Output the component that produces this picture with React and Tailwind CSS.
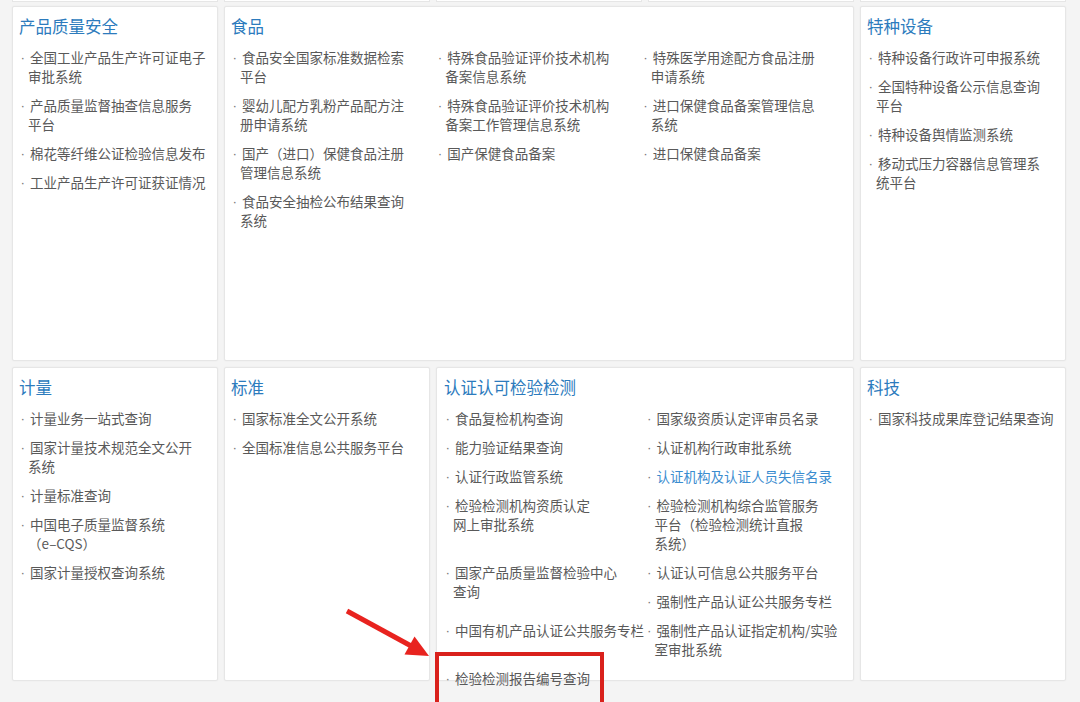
import React from "react";

// each item: array of lines (explicit breaks as in the reference)
const quality = [
  ["全国工业产品生产许可证电子", "审批系统"],
  ["产品质量监督抽查信息服务", "平台"],
  ["棉花等纤维公证检验信息发布"],
  ["工业产品生产许可证获证情况"],
];

const foodCols = [
  [
    ["食品安全国家标准数据检索", "平台"],
    ["婴幼儿配方乳粉产品配方注", "册申请系统"],
    ["国产（进口）保健食品注册", "管理信息系统"],
    ["食品安全抽检公布结果查询", "系统"],
  ],
  [
    ["特殊食品验证评价技术机构", "备案信息系统"],
    ["特殊食品验证评价技术机构", "备案工作管理信息系统"],
    ["国产保健食品备案"],
  ],
  [
    ["特殊医学用途配方食品注册", "申请系统"],
    ["进口保健食品备案管理信息", "系统"],
    ["进口保健食品备案"],
  ],
];

const equipment = [
  ["特种设备行政许可申报系统"],
  ["全国特种设备公示信息查询", "平台"],
  ["特种设备舆情监测系统"],
  ["移动式压力容器信息管理系", "统平台"],
];

const metrology = [
  ["计量业务一站式查询"],
  ["国家计量技术规范全文公开", "系统"],
  ["计量标准查询"],
  ["中国电子质量监督系统", "（e–CQS）"],
  ["国家计量授权查询系统"],
];

const standards = [["国家标准全文公开系统"], ["全国标准信息公共服务平台"]];

// floated two per row, same order as the source page
const certification = [
  { lines: ["食品复检机构查询"] },
  { lines: ["国家级资质认定评审员名录"] },
  { lines: ["能力验证结果查询"] },
  { lines: ["认证机构行政审批系统"] },
  { lines: ["认证行政监管系统"] },
  { lines: ["认证机构及认证人员失信名录"], blue: true },
  { lines: ["检验检测机构资质认定", "网上审批系统"] },
  { lines: ["检验检测机构综合监管服务", "平台（检验检测统计直报", "系统）"] },
  { lines: ["国家产品质量监督检验中心", "查询"] },
  { lines: ["认证认可信息公共服务平台"] },
  { lines: ["强制性产品认证公共服务专栏"] },
  { lines: ["中国有机产品认证公共服务专栏"] },
  { lines: ["强制性产品认证指定机构/实验", "室审批系统"] },
  { lines: ["检验检测报告编号查询"] },
];

const tech = [["国家科技成果库登记结果查询"]];

function Item({ lines, blue, className = "" }) {
  return (
    <li
      className={`pl-[9px] indent-[-9px] mb-[10px] text-[13.5px] leading-[19px] whitespace-nowrap ${
        blue ? "text-[#3a8ccf]" : "text-[#595959]"
      } ${className}`}
    >
      <span
        className="inline-block align-top w-[11px] h-[19px] pl-[1.5px] indent-0 leading-[19px] text-[#777]"
        style={{ fontFamily: '"Liberation Sans", sans-serif' }}
      >
        ·
      </span>
      {lines.map((line, i) => (
        <React.Fragment key={i}>
          {i > 0 && <br />}
          {line}
        </React.Fragment>
      ))}
    </li>
  );
}

function Card({ title, className = "", children }) {
  return (
    <div
      className={`bg-white border border-[#e6e6e6] rounded-[2px] shadow-[0_0_2px_rgba(0,0,0,0.05)] pt-[7px] px-[6px] ${className}`}
    >
      <h2 className="text-[16.5px] leading-[24px] text-[#2c7bbd] mb-[10px]">{title}</h2>
      {children}
    </div>
  );
}

function List({ items }) {
  return (
    <ul>
      {items.map((lines, i) => (
        <Item key={i} lines={lines} />
      ))}
    </ul>
  );
}

export default function App() {
  return (
    <div
      className="relative w-[1080px] h-[702px] overflow-hidden bg-[#f4f4f4]"
      style={{ fontFamily: '"Noto Sans CJK SC", "Noto Sans", sans-serif' }}
    >
      {/* bottom edge of the row above */}
      <div className="grid grid-cols-[repeat(5,206px)] gap-x-[6px] pl-[12px] h-[2px]">
        {[0, 1, 2, 3, 4].map((i) => (
          <div key={i} className="bg-white border-b border-x border-[#e6e6e6]" />
        ))}
      </div>

      <div className="grid grid-cols-[repeat(5,206px)] grid-rows-[355px_314px] gap-[6px] pl-[12px] pt-[4px]">
        <Card title="产品质量安全">
          <List items={quality} />
        </Card>

        <Card title="食品" className="col-span-3">
          <div className="grid grid-cols-3">
            {foodCols.map((col, i) => (
              <List key={i} items={col} />
            ))}
          </div>
        </Card>

        <Card title="特种设备">
          <List items={equipment} />
        </Card>

        <Card title="计量">
          <List items={metrology} />
        </Card>

        <Card title="标准">
          <List items={standards} />
        </Card>

        <Card title="认证认可检验检测" className="col-span-2 pl-[7px]">
          <ul className="flow-root">
            {certification.map((it, i) => (
              <Item key={i} lines={it.lines} blue={it.blue} className="float-left w-1/2" />
            ))}
          </ul>
        </Card>

        <Card title="科技">
          <List items={tech} />
        </Card>
      </div>

      {/* annotation: arrow and box */}
      <svg className="absolute left-0 top-0 pointer-events-none" width="1080" height="702">
        <line x1="347" y1="611" x2="413" y2="647" stroke="#e8231f" strokeWidth="5" />
        <polygon points="429,656 404.5,654.5 414.5,636.5" fill="#e8231f" />
      </svg>
      <div className="absolute left-[435px] top-[652px] w-[169px] h-[70px] border-[4px] border-[#d9211c]" />
    </div>
  );
}
